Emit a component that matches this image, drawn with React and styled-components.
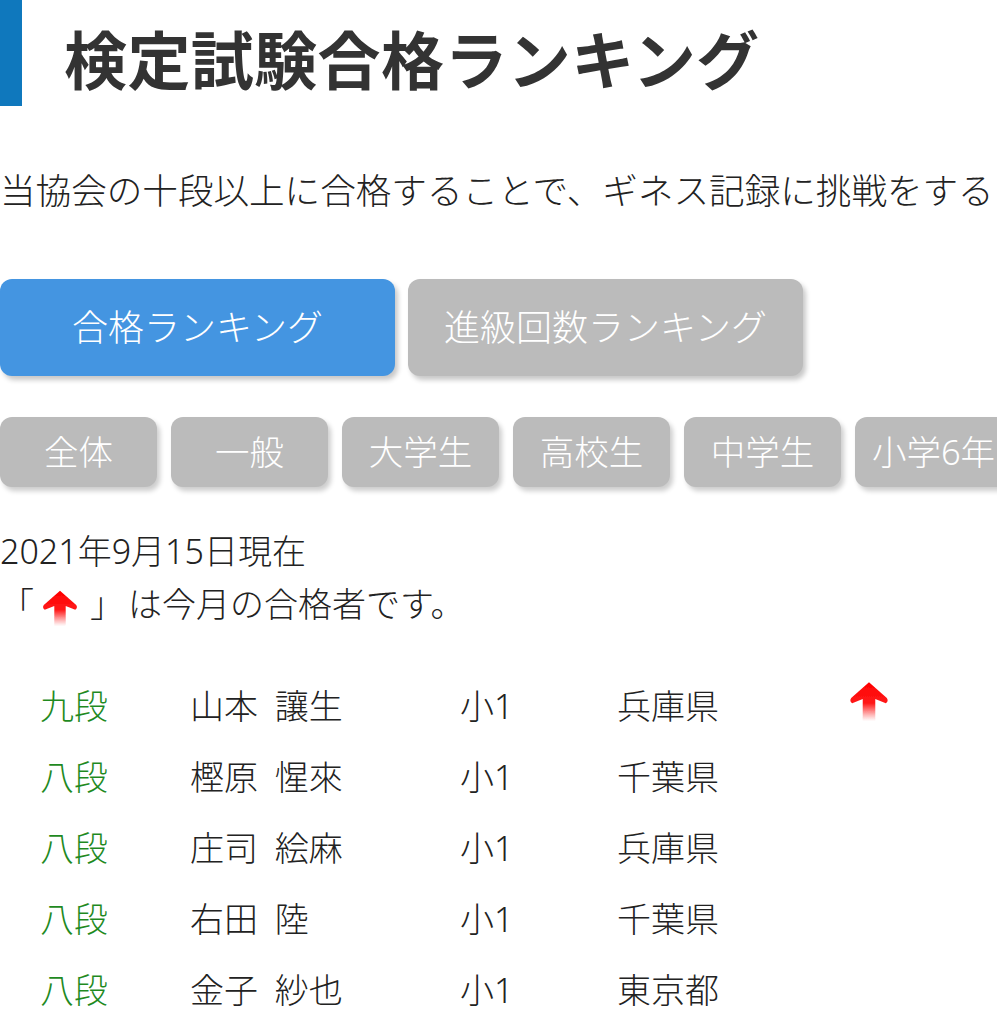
import React from 'react';
import styled, {createGlobalStyle} from 'styled-components';

const GlobalStyle = createGlobalStyle`
  body {
    margin: 0;
    background: #fff;
    font-family: "Noto Sans", "Noto Sans CJK JP", sans-serif;
    color: #222;
  }
  #root {
    width: 997px;
    overflow: hidden;
  }
`;

const Page = styled.div`
  width: 997px;
  overflow: hidden;
`;

const Header = styled.header`
  display: flex;
  align-items: center;
  gap: 42px;
  height: 106px;
`;

const Bar = styled.div`
  width: 22px;
  height: 106px;
  background: #0f78bd;
`;

const Title = styled.h1`
  margin: 6px 0 0;
  font-family: "Noto Sans CJK JP", sans-serif;
  font-size: 63px;
  font-weight: 700;
  color: #333;
  letter-spacing: 0.4px;
`;

const Lead = styled.p`
  margin: 59px 0 0;
  font-size: 35.6px;
  line-height: 51px;
  white-space: nowrap;
  color: #222;
  font-weight: 300;
`;

const Tabs = styled.div`
  display: flex;
  gap: 13px;
  margin-top: 63px;
`;

const Tab = styled.button`
  width: 395px;
  height: 97px;
  border: none;
  border-radius: 12px;
  background: ${p => (p.$active ? '#4495e1' : '#bbbbbb')};
  color: #fff;
  font-family: inherit;
  font-size: 36px;
  font-weight: 300;
  padding: 0 0 4px;
  box-shadow: 3px 4px 5px rgba(0, 0, 0, 0.22);
  flex-shrink: 0;
`;

const Filters = styled.div`
  display: flex;
  gap: 14px;
  margin-top: 41px;
`;

const Filter = styled.button`
  width: 157px;
  height: 70px;
  flex-shrink: 0;
  border: none;
  border-radius: 12px;
  background: #bbbbbb;
  color: #fff;
  font-family: inherit;
  font-size: 34.5px;
  font-weight: 300;
  white-space: nowrap;
  padding: 0 0 4px;
  box-shadow: 3px 4px 5px rgba(0, 0, 0, 0.2);
`;

const Note = styled.div`
  margin-top: 38px;
  font-size: 34px;
  line-height: 53px;
  font-weight: 300;
`;

const NoteLine = styled.div`
  display: flex;
  align-items: center;
  white-space: nowrap;
`;

const Bracket = styled.span`
  display: inline-block;
  width: ${p => p.$w}px;
  text-align: ${p => p.$align};
`;

const NoteArrow = styled.span`
  display: inline-flex;
  margin: 4px 10px 0 12px;
`;

const Table = styled.div`
  margin-top: 38px;
`;

const Row = styled.div`
  display: grid;
  grid-template-columns: 40px 150px 270px 157px 230px 46px;
  align-items: center;
  height: 71px;
  font-size: 34px;
  font-weight: 300;
  white-space: nowrap;
`;

const Rank = styled.span`
  color: #1f8a1f;
`;

const Cell = styled.span`
  color: #222;
  word-spacing: 8px;
`;

const Arrow = ({size = 42}) => (
  <svg width={size} height={size} viewBox="0 0 42 42">
    <defs>
      <linearGradient id="fade" x1="0" y1="0" x2="0" y2="1">
        <stop offset="0" stopColor="#ff0000" />
        <stop offset="0.55" stopColor="#ff1a1a" />
        <stop offset="1" stopColor="#ff4040" stopOpacity="0" />
      </linearGradient>
      <filter id="soft" x="-10%" y="-10%" width="120%" height="120%">
        <feGaussianBlur stdDeviation="0.7" />
      </filter>
    </defs>
    <path
      d="M21 4 L38 19 Q40 22 37 24 L27 20 L27 41 L15 41 L15 20 L5 24 Q2 22 4 19 Z"
      fill="url(#fade)"
      filter="url(#soft)"
    />
  </svg>
);

const rows = [
  {rank: '九段', name: '山本 讓生', grade: '小1', pref: '兵庫県', up: true},
  {rank: '八段', name: '樫原 惺來', grade: '小1', pref: '千葉県'},
  {rank: '八段', name: '庄司 絵麻', grade: '小1', pref: '兵庫県'},
  {rank: '八段', name: '右田 陸', grade: '小1', pref: '千葉県'},
  {rank: '八段', name: '金子 紗也', grade: '小1', pref: '東京都'},
];

const filters = ['全体', '一般', '大学生', '高校生', '中学生', '小学6年'];

const App = () => {
  return (
    <>
      <GlobalStyle />
      <Page>
        <Header>
          <Bar />
          <Title>検定試験合格ランキング</Title>
        </Header>
        <Lead>当協会の十段以上に合格することで、ギネス記録に挑戦をする</Lead>
        <Tabs>
          <Tab $active>合格ランキング</Tab>
          <Tab>進級回数ランキング</Tab>
        </Tabs>
        <Filters>
          {filters.map(f => (
            <Filter key={f}>{f}</Filter>
          ))}
        </Filters>
        <Note>
          <NoteLine>2021年9月15日現在</NoteLine>
          <NoteLine>
            <Bracket $w={28} $align="right">「</Bracket>
            <NoteArrow>
              <Arrow size={40} />
            </NoteArrow>
            <Bracket $w={38} $align="left">」</Bracket>
            は今月の合格者です。
          </NoteLine>
        </Note>
        <Table>
          {rows.map((r, i) => (
            <Row key={i}>
              <span />
              <Rank>{r.rank}</Rank>
              <Cell>{r.name}</Cell>
              <Cell>{r.grade}</Cell>
              <Cell>{r.pref}</Cell>
              <span>{r.up && <Arrow size={44} />}</span>
            </Row>
          ))}
        </Table>
      </Page>
    </>
  );
};

export default App;
